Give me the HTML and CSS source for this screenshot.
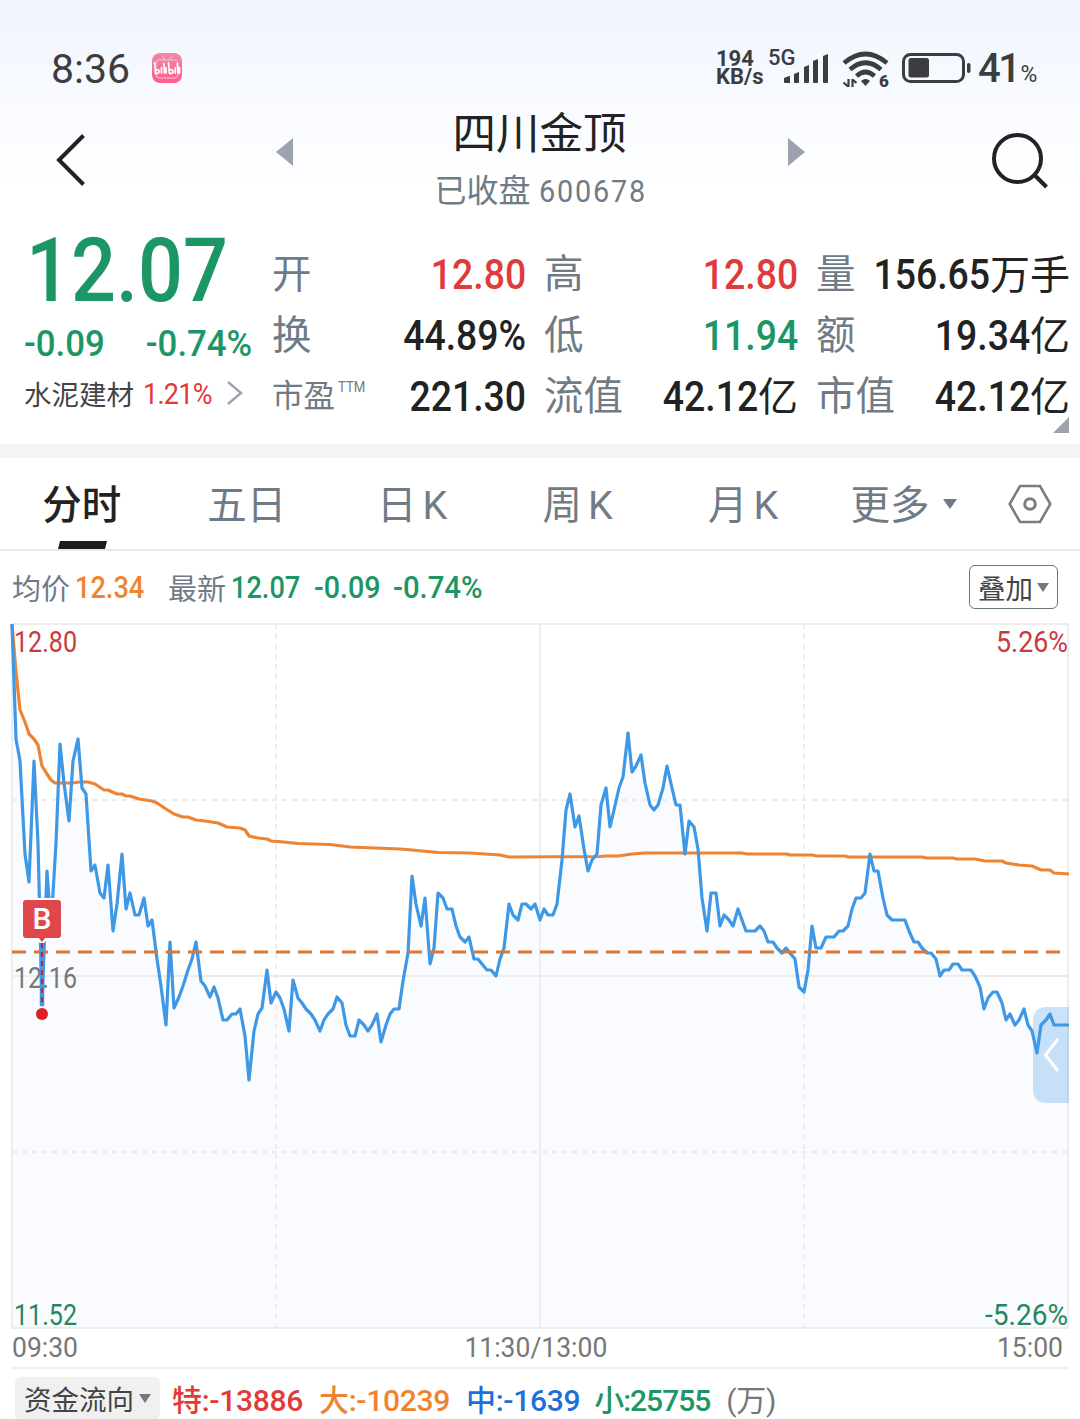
FILE: index.html
```html
<!DOCTYPE html>
<html lang="zh-CN">
<head>
  <meta charset="UTF-8" />
  <meta name="viewport" content="width=device-width, initial-scale=1.0">
  <title>四川金顶 600678</title>
  <link rel="stylesheet" href="styles.css">
</head>
<body>

  <!-- Header -->
  <header class="header">
    <div class="status-bar">
      <span class="clock">8:36</span>
      <svg class="app-icon" width="30" height="30" viewBox="0 0 30 30">
        <defs>
          <linearGradient id="pink" x1="0" y1="0" x2="0" y2="1">
            <stop offset="0" stop-color="#f088a8" />
            <stop offset="1" stop-color="#ff5c8d" />
          </linearGradient>
        </defs>
        <rect width="30" height="30" rx="8" fill="url(#pink)" />
        <g fill="none" stroke="#f9a9c1" stroke-width="1.6" stroke-linecap="round">
          <path d="M10 3l3 4M20 3l-3 4" />
          <rect x="4" y="7" width="22" height="18" rx="4" />
        </g>
        <g fill="none" stroke="#fff" stroke-width="1.7" stroke-linecap="round" stroke-linejoin="round">
          <path d="M2.600 9.500L3.500 20.500c4.500.5 5-4.500.8-3.700M9.500 14.500v5.500M11.800 10.500l.7 9.500M14 14.500v5.500" />
          <path d="M16.500 9.500l.9 11c4.500.5 5-4.500.8-3.700M23.300 14.500v5.500M25.300 10.500l.7 9.500M27.500 14.500v5.500" />
        </g>
      </svg>
      <div class="net-speed"><span>194</span><span>KB/s</span></div>
      <div class="signal">
        <span class="signal-type">5G</span>
        <svg width="44" height="30" viewBox="0 0 44 30" fill="#3c3d3f">
          <path d="M0 25l5-2h1v7H1q-1 0-1-1z" />
          <path d="M10 21l5-2v10q0 1-1 1h-3q-1 0-1-1z" />
          <path d="M20 14l5-2v17q0 1-1 1h-3q-1 0-1-1z" />
          <path d="M29 8l5-2v23q0 1-1 1h-3q-1 0-1-1z" />
          <path d="M39 3l5-2v28q0 1-1 1h-3q-1 0-1-1z" />
        </svg>
      </div>
      <svg class="wifi" width="48" height="38" viewBox="0 0 48 38">
        <g fill="none" stroke="#3c3d3f" stroke-width="4.600">
          <path d="M2 12Q23.500-6 45 12" />
          <path d="M8 18.500Q23.500 5 39 18.500" />
          <path d="M14.500 25Q23.500 17 32.500 25" />
        </g>
        <path d="M19 30q4.500-4 9 0l-4.500 5z" fill="#3c3d3f" />
        <g fill="none" stroke="#3c3d3f" stroke-width="2.200">
          <path d="M6.500 28v8M1.500 31.500l4.500 4M10.500 36v-8M14.500 32l-4-3.500" />
        </g>
        <text x="37" y="35.500" class="wifi-gen">6</text>
      </svg>
      <svg class="battery" width="70" height="30" viewBox="0 0 70 30">
        <rect x="1.500" y="1.500" width="60" height="27" rx="7" fill="none" stroke="#3c3d3f" stroke-width="3" />
        <rect x="6.500" y="5" width="20.500" height="19.500" rx="2.500" fill="#3c3d3f" />
        <rect x="65" y="10" width="3.500" height="10" rx="1.700" fill="#3c3d3f" />
      </svg>
      <span class="battery-level">41<small>%</small></span>
    </div>

    <nav class="nav-bar">
      <svg class="back" width="32" height="54" viewBox="0 0 32 54">
        <path d="M28.500 2.500L4 27l24.500 24.500" fill="none" stroke="#222" stroke-width="4" />
      </svg>
      <svg class="prev" width="17" height="28" viewBox="0 0 17 28"><path d="M17 0v28L0 14z" fill="#9ca3ae" /></svg>
      <div class="stock-title">
        <h1>四川金顶</h1>
        <p>已收盘 <span>600678</span></p>
      </div>
      <svg class="next" width="17" height="28" viewBox="0 0 17 28"><path d="M0 0v28l17-14z" fill="#9ca3ae" /></svg>
      <svg class="search" width="58" height="56" viewBox="0 0 58 56" fill="none" stroke="#222" stroke-width="4">
        <circle cx="26.500" cy="25.500" r="23.500" />
        <path d="M43.500 42l12 12" />
      </svg>
    </nav>
  </header>

  <!-- Quote -->
  <section class="quote">
    <div class="price-box">
      <div class="price green"><b class="num">12.07</b></div>
      <div class="change green"><b class="num">-0.09</b><b class="num right">-0.74%</b></div>
      <div class="sector">
        <span>水泥建材</span><b class="num red">1.21%</b>
        <svg width="18" height="26" viewBox="0 0 18 26"><path d="M2 2l13 11L2 24" fill="none" stroke="#9ca3ae" stroke-width="2.400" /></svg>
      </div>
    </div>
    <dl class="stats">
      <div><dt>开</dt><dd><b class="num right red">12.80</b></dd></div>
      <div><dt>高</dt><dd><b class="num right red">12.80</b></dd></div>
      <div><dt>量</dt><dd><b class="num right">156.65</b>万手</dd></div>
      <div><dt>换</dt><dd><b class="num right">44.89%</b></dd></div>
      <div><dt>低</dt><dd><b class="num right green">11.94</b></dd></div>
      <div><dt>额</dt><dd><b class="num right">19.34</b>亿</dd></div>
      <div><dt class="pe">市盈<sup>TTM</sup></dt><dd><b class="num right">221.30</b></dd></div>
      <div><dt>流值</dt><dd><b class="num right">42.12</b>亿</dd></div>
      <div><dt>市值</dt><dd><b class="num right">42.12</b>亿</dd></div>
    </dl>
    <span class="corner"></span>
  </section>

  <!-- Period tabs -->
  <div class="tabs">
    <span class="tab active">分时</span>
    <span class="tab">五日</span>
    <span class="tab">日<em>K</em></span>
    <span class="tab">周<em>K</em></span>
    <span class="tab">月<em>K</em></span>
    <span class="tab more">更多<i class="caret"></i></span>
    <svg class="settings" width="44" height="40" viewBox="0 0 44 40" fill="none" stroke="#7c7c7c" stroke-width="2.600">
      <path d="M12 2h20l10.300 18L32 38H12L1.700 20z" />
      <circle cx="22" cy="20" r="5.300" stroke-width="3" />
    </svg>
  </div>

  <!-- Chart -->
  <div class="legend">
    <span class="legend-label">均价</span><b class="num orange avg">12.34</b>
    <span class="legend-label">最新</span><b class="num green last">12.07</b>
    <b class="num green diff">-0.09</b>
    <b class="num green pct">-0.74%</b>
    <button class="overlay-btn">叠加<i class="caret"></i></button>
  </div>

  <svg class="chart" width="1080" height="716" viewBox="0 620 1080 716">
    <polygon id="area" class="area" />
    <g class="grid">
      <path d="M12 976H1068M540 624V1328" />
      <path d="M12 800H1068M12 1152H1068M276 624V1328M804 624V1328" stroke-dasharray="5 5" />
      <rect x="12" y="624" width="1056" height="704" fill="none" />
    </g>
    <text x="14" y="652" textLength="63" lengthAdjust="spacingAndGlyphs" fill="#c93a3e">12.80</text>
    <text x="14" y="988" textLength="63" lengthAdjust="spacingAndGlyphs" fill="#777">12.16</text>
    <text x="14" y="1325" textLength="63" lengthAdjust="spacingAndGlyphs" fill="#23875f">11.52</text>
    <text x="996" y="652" textLength="72" lengthAdjust="spacingAndGlyphs" fill="#c93a3e">5.26%</text>
    <text x="985" y="1325" textLength="83" lengthAdjust="spacingAndGlyphs" fill="#23875f">-5.26%</text>
    <polyline id="avgLine" class="avg-line" />
    <polyline id="priceLine" class="price-line" />
    <path class="cost-line" d="M12 952H1060" />
    <g class="buy-mark">
      <rect x="22" y="898" width="40" height="42" rx="4" fill="#fff" />
      <path d="M36 938h12l-6 8z" fill="#fff" />
      <path d="M38 937h8l-4 5z" fill="#e0474b" />
      <rect x="23" y="900" width="38" height="38" rx="3" fill="#e0474b" />
      <text x="42" y="929" text-anchor="middle">B</text>
      <path d="M42 943V1006" stroke="#3f98e6" stroke-width="4.500" />
      <path d="M42 943V1006" stroke="#b02a50" stroke-width="2.200" stroke-dasharray="5 4" />
      <circle cx="42" cy="1014" r="6" fill="#dc2023" />
    </g>
    <path d="M1069 1007h-22q-14 0-14 14v68q0 14 14 14h22z" fill="#3d97e6" fill-opacity=".27" />
    <path d="M1058 1039l-12.500 16 12.500 16" fill="none" stroke="#fff" stroke-width="3" />
  </svg>
  <div class="time-axis"><span>09:30</span><span>11:30/13:00</span><span>15:00</span></div>

  <!-- Money flow -->
  <div class="flow">
    <button class="flow-btn">资金流向<i class="caret"></i></button>
    <span class="red">特:-13886</span>
    <span class="orange">大:-10239</span>
    <span class="blue">中:-1639</span>
    <span class="green">小:25755</span>
    <span class="unit">(万)</span>
  </div>

  <script src="chart.js"></script>
</body>
</html>
```
FILE: styles.css
```css
:root {
  --text: #222;
  --label: #6f7b86;
  --red: #e03a3a;
  --green: #1c9665;
  --orange: #ee8432;
  --blue: #1f6fd6;
  --dark: #3c3d3f;
  --line: #e8e8e8;
}

* {
  box-sizing: border-box;
  margin: 0;
  padding: 0;
}

body {
  width: 1080px;
  height: 1419px;
  overflow: hidden;
  font-family: Roboto, "Noto Sans CJK SC", sans-serif;
  background: #fff;
  color: var(--text);
}

i, em {
  font-style: normal;
}

svg {
  display: block;
  flex: none;
}

.red { color: var(--red); }
.green { color: var(--green); }
.orange { color: var(--orange); }
.blue { color: var(--blue); }

/* Narrow figures */
.num {
  display: inline-block;
  font-weight: 500;
  white-space: nowrap;
  transform: scaleX(0.89);
  transform-origin: left center;
}

.num.right {
  transform-origin: right center;
}

.caret {
  display: inline-block;
  border: 7px solid transparent;
  border-top: 10px solid currentColor;
  border-bottom: 0;
}

/* Header */
.header {
  height: 220px;
  background: linear-gradient(#eff4fe, #f9fbff 50%, #fff 85%);
}

.status-bar {
  display: flex;
  align-items: center;
  height: 106px;
  padding: 32px 0 2px 51px;
  color: var(--dark);
}

.status-bar > * {
  flex: none;
}

.clock {
  width: 101px;
  padding-top: 2px;
  font-size: 41px;
  line-height: 44px;
}

.net-speed {
  display: flex;
  flex-direction: column;
  width: 52px;
  margin-left: 534px;
  font-size: 22px;
  font-weight: 700;
  line-height: 18.500px;
}

.signal {
  position: relative;
  width: 62px;
  padding-left: 16px;
}

.signal-type {
  position: absolute;
  left: 0;
  top: -7px;
  font-size: 22px;
  font-weight: 500;
  line-height: 24px;
}

.wifi {
  margin: 3px 0 0 12px;
}

.wifi-gen {
  font-size: 17px;
  font-weight: 900;
  fill: var(--dark);
}

.battery {
  margin-left: 12px;
}

.battery-level {
  margin-left: 6px;
  padding-top: 1px;
  font-size: 40px;
  font-weight: 500;
  letter-spacing: -2.500px;
  white-space: nowrap;
}

.battery-level small {
  display: inline-block;
  margin-left: 2px;
  font-size: 23px;
  font-weight: 400;
  letter-spacing: 0;
}

.nav-bar {
  display: flex;
  align-items: flex-start;
  height: 114px;
  padding-left: 55px;
}

.back {
  margin-top: 27px;
}

.prev {
  margin: 32px 0 0 189px;
}

.stock-title {
  width: 495px;
  padding-right: 2px;
  text-align: center;
}

.stock-title h1 {
  font-size: 43.500px;
  font-weight: 400;
  line-height: 58px;
}

.stock-title p {
  font-size: 32px;
  line-height: 54px;
  color: var(--label);
}

.stock-title p span {
  display: inline-block;
  margin-right: -14px;
  letter-spacing: 2px;
  transform: scaleX(0.9);
  transform-origin: left center;
}

.next {
  margin-top: 32px;
}

.search {
  margin: 27px 0 0 186px;
}

/* Quote */
.quote {
  position: relative;
  display: flex;
  height: 238px;
  border-bottom: 14px solid #f4f4f4;
}

.price-box {
  width: 272px;
  padding-left: 24px;
}

.price {
  height: 94px;
  padding-left: 2px;
  font-size: 89px;
  line-height: 101px;
}

.change {
  display: flex;
  justify-content: space-between;
  width: 228px;
  font-size: 37px;
  line-height: 60px;
}

.change .num {
  transform: scaleX(0.94);
}

.sector {
  display: flex;
  align-items: center;
  height: 38px;
  font-size: 27.500px;
  color: #444;
}

.sector .num {
  width: 83px;
  margin-left: 9px;
  font-size: 30px;
  font-weight: 400;
  letter-spacing: -0.8px;
  transform: scaleX(0.9);
}

.stats {
  display: grid;
  grid-template-columns: repeat(3, 254px);
  grid-auto-rows: 61px;
  column-gap: 18px;
  padding-top: 24px;
}

.stats div {
  display: flex;
  align-items: center;
  justify-content: space-between;
  white-space: nowrap;
}

.stats dt {
  font-size: 39.500px;
  line-height: 61px;
  color: var(--label);
}

.stats dt.pe {
  width: 90px;
  font-size: 31.500px;
}

.stats sup {
  display: inline-block;
  margin-left: 3px;
  font-size: 15.500px;
  vertical-align: 15px;
  line-height: 1;
  transform: scaleX(0.85);
  transform-origin: left center;
}

.stats dd {
  font-size: 40px;
  line-height: 61px;
}

.stats .num {
  font-size: 42px;
}

.corner {
  position: absolute;
  right: 11px;
  bottom: 11px;
  border: 8px solid #9ca3ae;
  border-top-color: transparent;
  border-left-color: transparent;
}

/* Tabs */
.tabs {
  display: flex;
  align-items: center;
  height: 93px;
  border-bottom: 2px solid var(--line);
  font-size: 39.500px;
  color: var(--label);
}

.tab {
  width: 165.500px;
  padding: 4px 3px 0 0;
  line-height: 87px;
  text-align: center;
}

.tab em {
  display: inline-block;
  margin-left: 6px;
}

.tab.active {
  position: relative;
  padding-right: 2px;
  font-weight: 500;
  color: var(--text);
}

.tab.active::after {
  content: "";
  position: absolute;
  left: 59px;
  bottom: 0;
  width: 47px;
  height: 8px;
  background: #1c1c1c;
  transform: skewX(-14deg);
}

.tab.more {
  width: 180px;
  padding-left: 23px;
  text-align: left;
}

.tab.more .caret {
  margin-left: 13px;
  vertical-align: 10px;
}

/* Chart */
.legend {
  display: flex;
  align-items: center;
  height: 69px;
  padding: 3px 22px 0 12px;
  font-size: 30.500px;
}

.legend-label {
  width: 63px;
  font-size: 29px;
  color: var(--label);
}

.legend .avg {
  width: 93px;
}

.legend .last {
  width: 83px;
}

.legend .diff {
  width: 79px;
  transform: scaleX(0.94);
}

.legend .pct {
  transform: scaleX(0.96);
}

.overlay-btn {
  display: flex;
  align-items: center;
  gap: 4px;
  height: 44px;
  margin-left: auto;
  padding: 0 8px;
  border: 1.500px solid #66747c;
  border-radius: 6px;
  background: #fff;
  font: 27.500px "Noto Sans CJK SC", sans-serif;
  color: #444;
}

.overlay-btn .caret,
.flow-btn .caret {
  border-width: 9px 6.500px 0;
  border-top-color: #777;
}

.chart text {
  font-size: 29px;
}

.area {
  fill: #f9fbff;
}

.grid {
  fill: none;
  stroke: #ececef;
  stroke-width: 1.800;
}

.avg-line,
.price-line {
  fill: none;
  stroke: var(--orange);
  stroke-width: 3.200;
  stroke-linejoin: round;
}

.price-line {
  stroke: #3f98e6;
}

.cost-line {
  stroke: #dc7630;
  stroke-width: 3.200;
  stroke-dasharray: 14 8;
}

.chart .buy-mark text {
  font-size: 30px;
  font-weight: 500;
  fill: #fff;
}

.time-axis {
  display: flex;
  justify-content: space-between;
  height: 40px;
  margin: -7px 12px 0;
  padding-right: 5px;
  border-bottom: 2px solid #efefef;
  font-size: 28.500px;
  line-height: 37px;
  color: #777;
}

.time-axis span {
  transform: scaleX(0.93);
  transform-origin: left center;
}

.time-axis span:nth-child(2) {
  margin-right: 3px;
  transform-origin: center;
}

.time-axis span:last-child {
  transform-origin: right center;
}

/* Money flow */
.flow {
  display: flex;
  align-items: center;
  height: 58px;
  padding: 0 15px;
  font-size: 30px;
  font-weight: 500;
  letter-spacing: -0.3px;
  white-space: nowrap;
}

.flow span {
  margin-right: 16px;
}

.flow .blue {
  margin-right: 14px;
}

.flow .green {
  letter-spacing: -1px;
}

.flow .unit {
  font-weight: 400;
  color: #777;
}

.flow-btn {
  display: flex;
  align-items: center;
  gap: 5px;
  height: 43px;
  margin-right: 12px;
  padding: 0 9px;
  border: 0;
  border-radius: 6px;
  background: #f0f0f0;
  font: 27.500px "Noto Sans CJK SC", sans-serif;
  color: #444;
}
```
FILE: chart.js
```js
// x,y pairs in chart coordinates, left to right through the session
const price = '12,624 16,739 20,761 25,854 29,882 34,761 38,843 42,1005 47,871 51,926 56,843 60,744 64,783 69,821 73,761 78,739 82,788 86,794 91,871 95,865 100,893 104,898 108,865 113,931 117,904 122,854 126,909 130,893 135,915 139,915 144,898 148,926 152,920 157,959 161,986 166,1025 170,942 174,1008 179,997 183,986 188,970 192,959 196,942 201,981 205,986 210,997 214,987 218,998 223,1020 227,1020 232,1014 236,1014 240,1009 245,1036 249,1080 254,1031 258,1014 262,1008 267,970 271,1003 '
  + '276,992 280,998 284,1009 289,1031 293,980 298,998 302,1003 306,1009 311,1014 315,1020 320,1031 324,1020 328,1014 333,1009 337,997 342,1003 346,1025 350,1036 355,1036 359,1020 364,1025 368,1031 372,1025 377,1014 381,1042 386,1025 390,1014 394,1009 399,1009 403,981 408,953 412,876 416,904 421,926 425,898 430,964 434,948 438,893 443,898 447,909 452,909 456,926 460,937 465,942 469,937 474,959 478,959 482,964 487,970 491,970 496,976 500,959 504,948 509,904 513,915 518,920 522,904 526,904 531,909 535,904 540,920 544,909 548,915 553,915 557,904 '
  + '562,860 566,810 570,794 575,827 579,816 584,849 588,871 592,860 597,854 601,805 606,788 610,827 614,810 619,788 623,777 628,733 632,772 636,766 641,755 645,783 650,805 654,810 658,805 663,788 667,766 672,788 676,805 680,805 685,854 689,821 694,827 698,849 702,898 707,931 711,893 716,893 720,926 724,915 729,920 733,926 738,909 742,920 746,931 755,931 760,926 764,931 768,942 773,942 777,948 782,953 786,948 790,953 795,959 799,987 804,992 808,970 812,926 816,948 821,948 '
  + '826,937 834,937 839,931 843,931 848,926 852,909 856,898 861,898 865,893 870,854 874,871 878,871 883,898 887,915 892,920 905,920 909,931 914,942 918,942 922,948 927,953 931,953 936,959 940,976 944,970 949,970 953,964 958,964 962,970 971,970 975,976 980,987 984,1009 988,998 993,992 997,992 1002,1003 1006,1020 1010,1014 1015,1025 1019,1020 1024,1009 1028,1025 1032,1031 1037,1053 1041,1025 1046,1020 1050,1014 1054,1025 1069,1025';

const average = '12,624 16,672 20,710 25,722 29,734 34,739 38,745 42,766 47,774 51,780 55,783 72,783 80,782 88,782 95,784 104,790 108,790 117,794 122,794 126,796 130,796 139,799 152,801 157,803 166,809 174,814 183,817 188,817 196,820 205,821 218,823 227,827 240,828 245,830 249,836 258,838 267,839 271,841 284,842 298,843.5 330,844.5 350,847 400,849 412,850 438,852.5 470,853 500,855 509,857 600,856.5 606,856 618,856 632,854 645,853 742,853 747,854 787,854 790,855 812,855 817,856 845,856 848,857 922,857 926,858 953,858 957,859 975,859 985,861 1002,861 1006,863 1019,865 1032,866 1041,870 1050,870 1054,873 1069,874';

document.getElementById('priceLine').setAttribute('points', price);
document.getElementById('avgLine').setAttribute('points', average);
document.getElementById('area').setAttribute('points', price + ' 1068,1328 12,1328');
```
